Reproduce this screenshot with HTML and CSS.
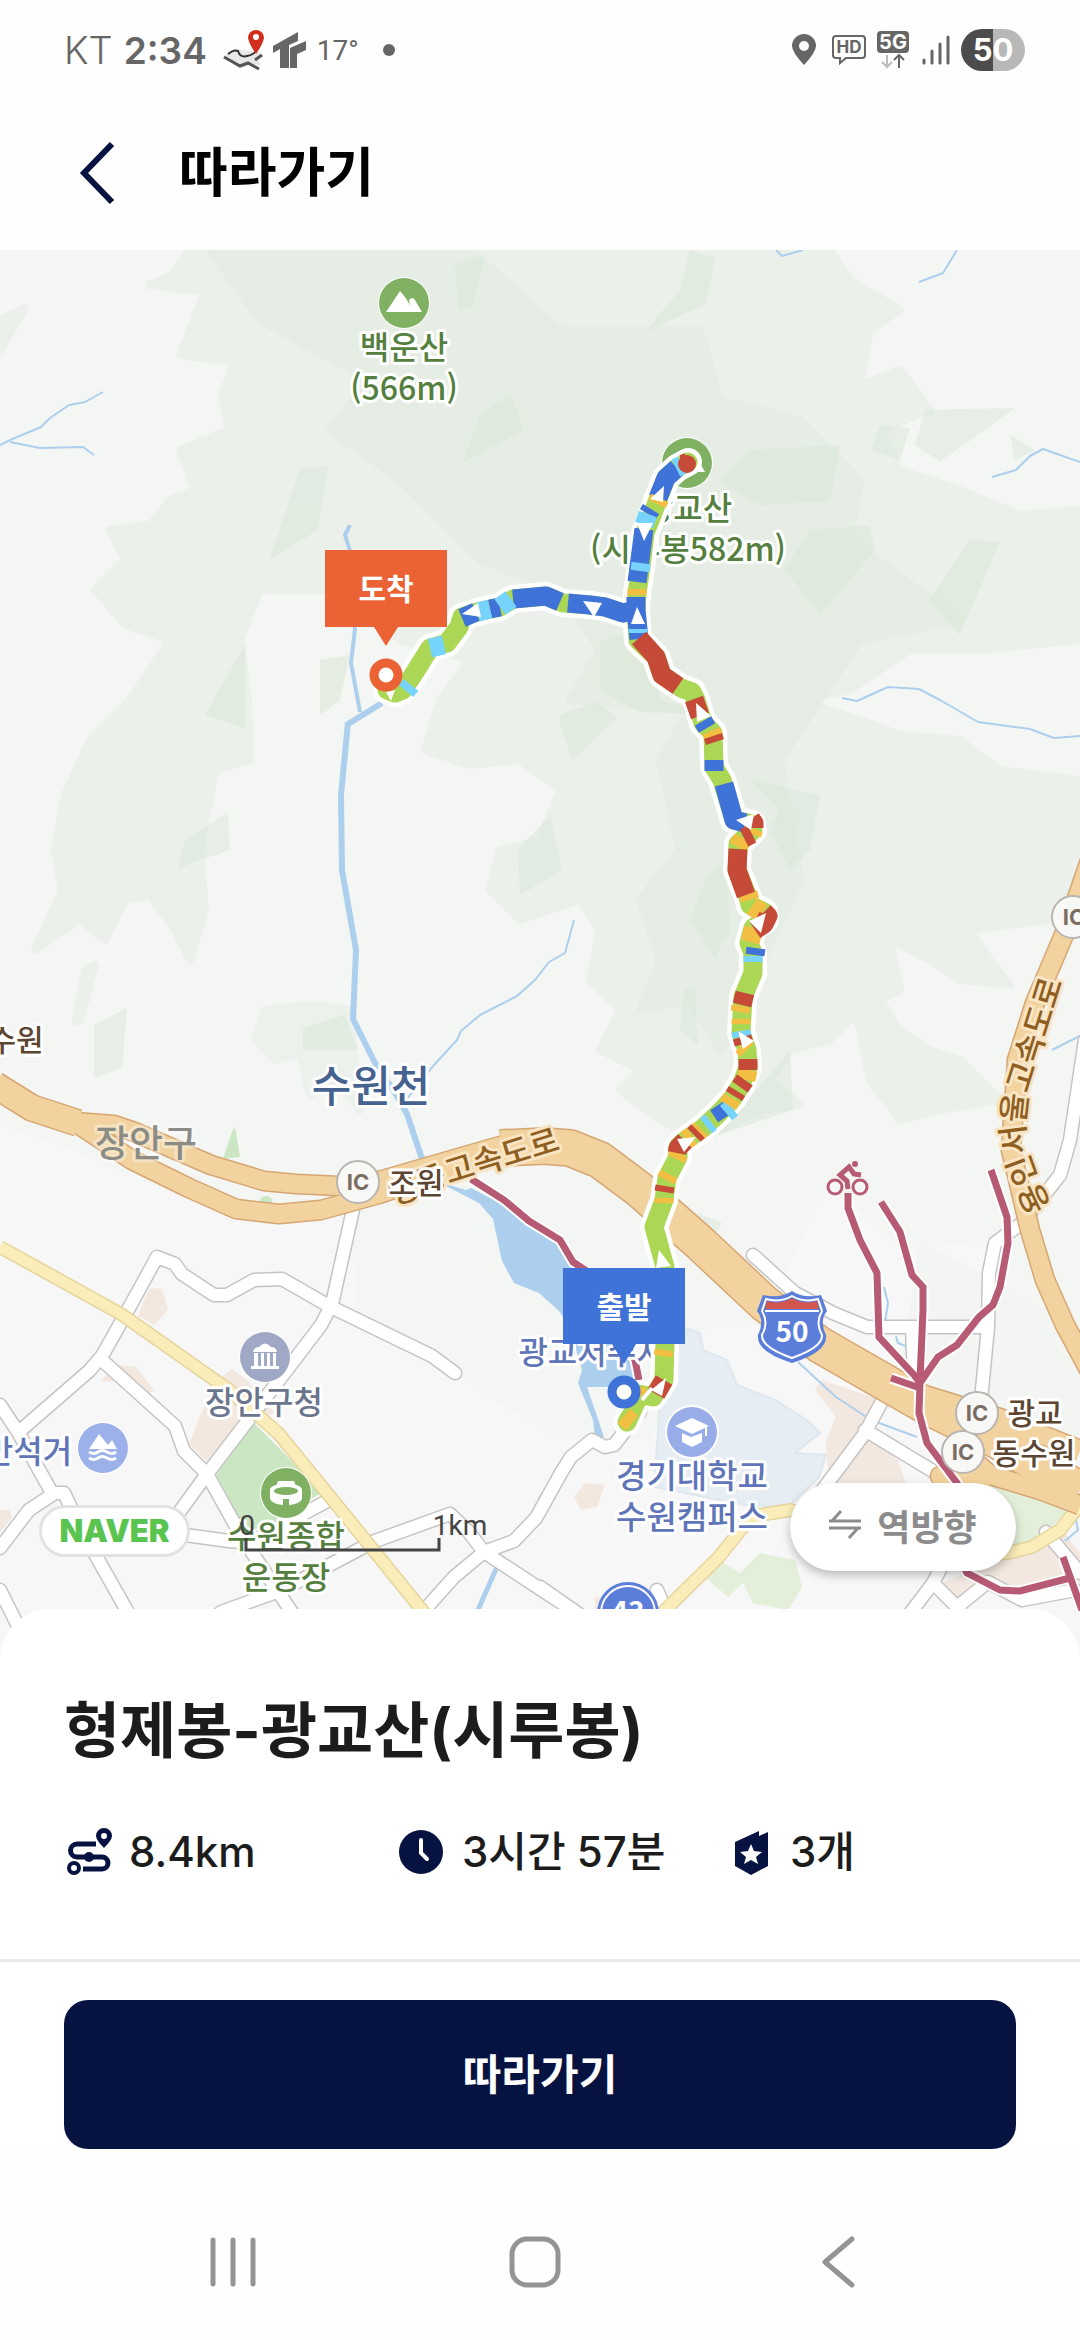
FILE: index.html
```html
<!DOCTYPE html>
<html lang="ko">
<head>
<meta charset="utf-8">
<meta name="viewport" content="width=device-width, initial-scale=1">
<title>따라가기</title>
<link rel="stylesheet" href="styles.css">
</head>
<body>
<div class="app">
  <div class="status">
    <span class="carrier">KT</span>
    <span class="clock">2:34</span>
    <svg class="ic-trail" width="42" height="42" viewBox="0 0 42 42" aria-hidden="true">
      <path d="M2 26 12 20 36 23 40 27 35 30 38 36 27 36 18 39 1 28z" fill="#e8e8e8"/>
      <path d="M1 28 17 37 25 34 36 40M32 31l7-5" fill="none" stroke="#555" stroke-width="3"/>
      <path d="M5 25q6-5 10-3 2 7 9 5 6-1 9-5" fill="none" stroke="#333" stroke-width="2"/>
      <path d="M33 25Q26 15 25 9a8 8 0 0 1 16 0Q40 15 33 25z" fill="#d0301f"/>
      <circle cx="33" cy="8" r="3" fill="#fff"/>
    </svg>
    <svg class="ic-tr" width="34" height="36" viewBox="0 0 34 36" aria-hidden="true">
      <path d="M0 14 25 0v9l-9 4v23H7V17l-7 4zM17 16l16-7v9l-9 4v14h-7z" fill="#666"/>
    </svg>
    <span class="temp">17°</span>
    <span class="dot"></span>
    <span class="spacer"></span>
    <svg class="ic-pin" width="26" height="32" viewBox="0 0 26 32" aria-hidden="true"><path fill-rule="evenodd" d="M13 31Q1 18 1 12a12 12 0 0 1 24 0Q25 18 13 31zM13 7a5 5 0 1 0 0 10 5 5 0 0 0 0-10z" fill="#666"/></svg>
    <svg class="ic-hd" width="36" height="32" viewBox="0 0 36 32" aria-hidden="true"><path d="M5 2h26q3 0 3 3v16q0 3-3 3H15l-6 5v-5H5q-3 0-3-3V5q0-3 3-3z" fill="none" stroke="#666" stroke-width="2"/><text x="18" y="19" class="t-hd">HD</text></svg>
    <svg class="ic-5g" width="32" height="38" viewBox="0 0 32 38" aria-hidden="true"><rect width="32" height="22" rx="4" fill="#666"/><text x="16" y="18" class="t-5g">5G</text><path d="M10 24v12M5 31l5 5 5-5" fill="none" stroke="#bbb" stroke-width="2"/><path d="M22 37V24M17 29l5-5 5 5" fill="none" stroke="#666" stroke-width="2"/></svg>
    <svg class="ic-bars" width="28" height="30" viewBox="0 0 28 30" aria-hidden="true"><path d="M2 25v3M10 16v12M18 9v19M26 2v26" stroke="#666" stroke-width="3" stroke-linecap="round"/></svg>
    <span class="battery">50</span>
  </div>

  <header class="head">
    <button class="back" aria-label="뒤로"><svg width="38" height="64" viewBox="0 0 38 64"><path d="M34 3 6 32 34 61" fill="none" stroke="#061240" stroke-width="6"/></svg></button>
    <h1>따라가기</h1>
  </header>

  <main class="map">
    <svg class="map-art" viewBox="0 250 1080 1413" role="img" aria-label="형제봉-광교산 코스 지도">
      <defs>
        <path id="yd" d="M394 1206 450 1184 598 1138"/>
        <path id="ys" d="M1051 1207Q1027 1160 1025 1135 1024 1105 1032 1080L1068 965"/>
        <path id="yr" d="M0 1247 121 1314 229 1390 279 1434 375 1552 430 1620M655 1620 719 1557 743 1527 760 1515 791 1510 900 1560 1008 1553 1032 1547 1060 1530 1080 1505"/>
        <path id="cy" d="M848 1193V1208L860 1240 877 1273 879 1337 914 1375 920 1383M881 1202 900 1232 912 1275 923 1287V1310L920 1380M991 1170 1007 1217 1008 1243 1000 1287 993 1305 979 1317 957 1345 938 1357 920 1383 919 1413 927 1443 957 1483 950 1540 967 1573 1000 1590 1020 1591 1070 1578M1063 1557 1082 1610M891 1378 920 1388M471 1179 504 1200 529 1221 560 1240 573 1262 585 1270 600 1300 635 1360 639 1380"/>
        <path id="trail" d="M688 462 677 468 666 478 657 502 653 513 645 533 641 567 637 593 636 610 623 613 605 607 590 605 563 603 546 596 513 599 500 607 477 612 462 617 459 627 447 643 430 648 415 672 403 690 395 693 387 690M636 610 638 640 656 657 662 675 681 688 692 692 696 700 703 723 713 733 714 767 722 780 734 820 752 824 753 830 738 844 737 870 748 897 750 905 764 912 765 920 753 928 749 943 753 953 753 973 743 997 741 1033 747 1050 748 1067 742 1083 733 1098 719 1113 703 1128 683 1142 678 1147 678 1157 667 1178 664 1200 654 1227 665 1267 665 1343 664 1380 653 1397 638 1394M637 1400 627 1422"/>
      </defs>
      <rect y="250" width="1080" height="1413" fill="#f4f6f4"/>

      <!-- woodland, light to dark -->
      <g class="wood" fill="#ebf0ea">
        <path d="M190 250 172 275 150 285 205 292 192 325 180 355 235 362 222 395 228 430 180 450 195 490 170 500 150 525 110 530 125 560 95 590 125 625 170 640 150 670 130 700 90 740 65 795 55 850 62 890 35 950 80 920 105 940 125 900 150 895 175 930 190 960 205 910 200 850 215 770 250 760 248 700 240 640 260 590 330 590 400 640 470 660 440 700 425 750 470 765 520 760 560 790 540 840 500 850 490 890 520 920 580 900 600 930 590 980 620 1010 600 1050 640 1070 620 1090 660 1120 700 1140 760 1110 800 1105 770 1080 790 1050 830 1040 860 1010 900 990 890 940 930 960 960 980 1010 985 990 960 970 930 1050 920 1080 930V780L1000 770 960 740 900 735 860 720 800 700 850 690 910 650 980 650 1080 640V510L1020 515 960 490 900 470 880 430 930 410 900 370 860 385 870 330 900 310 850 280 830 250z"/>
        <path d="M265 1010 255 1040 275 1060 300 1052 310 1095 340 1085 360 1110 350 1010 310 1005z" opacity=".8"/>
        <path d="M850 980 880 1000 900 1030 930 1050 960 1060 1000 1100 940 1110 900 1120 870 1080z"/>
        <path d="M85 970 95 965 80 1020 76 1022zM0 320 25 308 0 350z"/>
      </g>
      <g class="wood deep">
        <path d="M210 250 260 320 370 380 330 430 400 480 480 560 560 590 600 650 570 700 690 710 660 760 680 850 640 900 660 960 640 1010 690 1000 720 1050 800 880 780 760 860 640 960 620 850 540 860 480 800 420 720 400 700 330 560 330 470 250z"/>
      </g>
      <g fill="#dbe8d8" opacity=".55">
        <path d="M455 265 485 256 472 308 458 309zM690 250 715 258 706 304 645 332 680 290zM510 393 524 430 463 463 480 415zM300 470 328 465 318 530 270 560zM205 715 245 645 245 728zM320 660 350 655 340 700 320 715z"/>
        <path d="M750 450 840 445 830 500 760 506 720 480zM880 425 910 428 900 460 872 450zM925 410 1015 408 940 462 915 445zM810 530 870 525 875 550 820 615 785 570zM970 540 1000 542 960 635 930 600zM1010 435 1035 450 1015 460z"/>
        <path d="M600 640 640 630 660 700 720 715 640 712 600 690zM560 715 597 702 617 718 572 760 560 725zM725 860 730 930 715 958 690 920 705 880zM750 780 820 795 810 850 790 870 770 830 780 810zM518 850 550 815 562 870 520 895zM185 840 228 812 230 850 178 868zM684 990 695 988 698 1045 680 1030zM94 1025 127 1008 122 1068 94 1078zM303 1028 345 1015 358 1050 303 1050zM718 1135 790 1050 793 1110zM695 1212 722 1223 716 1234z"/>
      </g>

      <!-- built-up ground -->
      <path d="M0 1125 60 1145 200 1205 280 1225 350 1215 370 1260 380 1330 430 1360 500 1400 560 1440 650 1440 700 1330 760 1325 830 1180 900 1250 990 1240 1000 1320 1080 1450V1663H0z" fill="#f7f7f7"/>
      <path d="M350 1215 450 1190 560 1320 575 1400 555 1430 500 1405 440 1350 360 1330z" fill="#f3f6f3"/>
      <path d="M920 1240 1080 1330 1080 1450 900 1380z" fill="#f2f5f2"/>
      <path d="M685 1328 700 1333 703 1350 727 1360 737 1385 775 1400 807 1420 820 1433 795 1453 826 1455 819 1477 788 1507 745 1505 654 1487 660 1403z" fill="#e6edf3" stroke="#dfe7ef" stroke-width="2"/>
      <g fill="#f2e8df">
        <path d="M198 1421 214 1383 232 1369 246 1379 275 1413 250 1425 207 1461 189 1444zM146 1295 151 1288 162 1289 168 1310 154 1325 138 1316zM100 1381 118 1365 136 1367 154 1390 146 1396 128 1382zM0 1510 10 1510 12 1518 0 1532z"/>
        <path d="M822 1380 881 1400 870 1433 829 1490 826 1440 836 1417 815 1390zM867 1437 898 1460 908 1490 830 1490zM585 1483 605 1485 597 1507 581 1510 574 1497zM943 1583 1015 1550 1063 1530 1080 1553V1590L988 1587 950 1605zM595 1597h15v13h-15z"/>
      </g>
      <g fill="#cbe6c3"><path d="M254 1423 282 1451 321 1493 264 1527 246 1531 216 1474zM223 1159 232 1132 235 1127 240 1157z"/><ellipse cx="266" cy="1201" rx="6" ry="5"/></g>
      <path d="M705 1577 722 1562 740 1573 760 1553 795 1560 802 1587 788 1610 753 1603 743 1583 728 1597zM950 1480 1022 1484 1070 1510 1029 1547 1000 1550z" fill="#e3efd9"/>

      <!-- water -->
      <path d="M421 1156 446 1184 466 1190 471 1188 500 1203 560 1240 600 1300 633 1360 640 1387 587 1387 595 1410 604 1437 595 1438 593 1420 578 1383 582 1370 570 1330 560 1312 539 1293 514 1283 502 1261 493 1219 479 1203 446 1186z" fill="#accfed"/>
      <g fill="none" stroke="#accfed" stroke-linejoin="round">
        <path d="M382 703 348 724M348 722 341 795 342 870 356 950 353 1019 379 1071 393 1089 407 1114 421 1156 427 1165" stroke-width="6"/>
        <path d="M350 525 345 535 351 554 355 629 351 663 360 712" stroke-width="4"/>
        <path d="M574 920 565 953 549 962 535 980 517 996 480 1015 461 1031 457 1040 434 1065 406 1100M0 445 10 440 41 427 50 418 69 405 85 402 103 392M10 442 40 448 83 447 94 455M919 282 943 273 957 250M776 250 782 256 803 250M992 477 1016 470 1030 456 1043 449 1080 462M842 698 857 701 888 687 919 689 940 700 978 722 1030 729 1054 738 1080 736M798 1362 836 1397 871 1420 917 1437M884 1287 888 1303 885 1322M1052 1050 1080 1036M1075 1515 1078 1530 1065 1541M896 1336 898 1343 908 1347" stroke-width="2"/>
        <path d="M500 1560 478 1610M555 1478 540 1500" stroke-width="5"/>
      </g>

      <!-- local roads: outline, then fill -->
      <g class="road-edge">
        <path id="r1" d="M21 1430 89 1371 102 1356 129 1308 157 1257 175 1264 182 1274 214 1295 227 1295 254 1280 282 1279 329 1306 432 1356 455 1373"/>
        <path id="r2" d="M354 1205 332 1304 321 1325 286 1371 207 1474 175 1518"/>
        <path id="r3" d="M104 1362 175 1426 184 1451 207 1474 243 1539 297 1620M0 1405 18 1432 52 1493 64 1493 82 1531 135 1625M0 1548 29 1510 52 1495M185 1535 229 1541 275 1545 M0 1590 25 1640"/>
        <path id="r4" d="M257 1539 329 1500M221 1612 282 1590 375 1541 450 1514 468 1531 484 1552 580 1615M420 1615 454 1577 484 1552 514 1541 536 1518 561 1473 571 1457 592 1440 605 1447 614 1445 640 1412"/>
        <path id="r5" d="M753 1255 795 1293 833 1313 867 1327 988 1327M1085 1040 1070 1140 1060 1175 1022 1223 995 1243 989 1273 988 1327 981 1400M912 1327 914 1378M881 1403 865 1433 800 1520M865 1430 936 1473 965 1490M905 1620 933 1583 960 1610M957 1607 988 1582 1022 1600 1075 1590M933 1583 945 1560M1046 1532 1080 1573M657 1590 670 1620M540 1587 580 1615"/>
      </g>
      <g class="road"><use href="#r1"/><use href="#r2"/><use href="#r3"/><use href="#r4"/><use href="#r5"/></g>
      <use href="#yr" class="yellow-edge"/>
      <use href="#yr" class="yellow"/>

      <!-- motorways -->
      <g class="mway-edge">
        <g stroke-width="21"><path d="M75 1122 114 1125 132 1131 211 1165 264 1181 296 1184 339 1186 379 1181 500 1146 560 1150M75 1122 132 1160 189 1188 236 1209 279 1214 321 1210 379 1194 500 1153"/>
        <path d="M1092 855 1066 930 1035 1003 1017 1060 1011 1150 1030 1230 1045 1280 1065 1325 1092 1375M915 1392 1000 1418 1080 1450M950 1440 990 1475 1040 1490 1080 1505M955 1493 940 1476 990 1478"/></g>
        <path d="M-5 1085 32 1108 78 1123" stroke-width="28"/>
        <path d="M500 1148 545 1146 570 1148 600 1160 640 1190 700 1243 765 1304 820 1345 895 1388 930 1408 1000 1442 1080 1490" stroke-width="38"/>
      </g>
      <g class="mway">
        <g stroke-width="18"><path d="M75 1122 114 1125 132 1131 211 1165 264 1181 296 1184 339 1186 379 1181 500 1146 560 1150M75 1122 132 1160 189 1188 236 1209 279 1214 321 1210 379 1194 500 1153"/>
        <path d="M1092 855 1066 930 1035 1003 1017 1060 1011 1150 1030 1230 1045 1280 1065 1325 1092 1375M915 1392 1000 1418 1080 1450M950 1440 990 1475 1040 1490 1080 1505M955 1493 940 1476 990 1478"/></g>
        <path d="M-5 1085 32 1108 78 1123" stroke-width="25"/>
        <path d="M500 1148 545 1146 570 1148 600 1160 640 1190 700 1243 765 1304 820 1345 895 1388 930 1408 1000 1442 1080 1490" stroke-width="35"/>
      </g>

      <!-- cycle ways -->
      <use href="#cy" class="cycle-edge"/>
      <use href="#cy" class="cycle"/>
      <g fill="none" stroke="#b75a74" stroke-width="3"><circle cx="835" cy="1187" r="7"/><circle cx="860" cy="1187" r="7"/><path d="M848 1189 847 1181 840 1175 849 1167 854 1174 861 1175" stroke-width="5"/></g><circle cx="855" cy="1164" r="3" fill="#b75a74"/>

      <!-- place symbols -->
      <g id="peak1" transform="translate(404 303)"><circle r="26" fill="#fff"/><circle r="25" fill="#80b163"/><path d="M-18 9-4-12Q4-3 6 3L5-3Q8-7 11-3L18 9z" fill="#fff"/></g>
      <use href="#peak1" x="283" y="160"/>
      <g transform="translate(265 1357)"><circle r="26" fill="#fff"/><circle r="25" fill="#9fa9c5"/><path d="M-12-5Q-11-10-6-10 0-17 6-10 11-10 12-5zM-11-4h4V9h-4zM-4-4h3V9h-3zM2-4h3V9H2zM8-4h3V9H8zM-14 9h28v3h-28z" fill="#fff"/></g>
      <g transform="translate(103 1448)"><circle r="26" fill="#fff"/><circle r="25" fill="#9cb1e9"/><path d="M-14 1-4-14 5-3 9-8 14 1z" fill="#fff"/><path d="M-14 4q5 3 9 0t9 0 9 0M-14 10q5 3 9 0t9 0 9 0" fill="none" stroke="#fff" stroke-width="3"/></g>
      <g transform="translate(286 1493)"><circle r="26" fill="#fff"/><circle r="25" fill="#80b163"/><path d="M-8-12H8L10-7H-10zM-16-4Q-14-9 0-9T16-4V6Q14 11 3 12V6H-3V12Q-14 11-16 6z" fill="#fff"/><ellipse cy="-2" rx="12" ry="4" fill="#80b163"/></g>
      <g transform="translate(692 1432)"><circle r="27" fill="#fff"/><circle r="25" fill="#98ade8"/><path d="M0-14 17-6 0 2-17-6zM-10 1-1 5 10 1V10L0 15-10 10zM13-5h2V4h-2z" fill="#fff"/></g>
      <g transform="translate(792 1327)"><path d="M0-36Q12-28 29-32L35-16Q27-6 34 8 36 25 0 36-36 25-34 8-27-6-35-16L-29-32Q-12-28 0-36z" fill="#5c7edb"/><path d="M0-31Q12-24 26-28L30-16Q23-4 30 8 31 20 0 31-31 20-30 8-23-4-30-16L-26-28Q-12-24 0-31z" fill="#5c7edb" stroke="#fff" stroke-width="2"/><path d="M-25-26Q-12-22 0-29 12-22 25-26L27-18H-27z" fill="#d15650"/><path d="M-27-16H27" stroke="#fff" stroke-width="2"/><text class="shield" y="15">50</text></g>
      <g transform="translate(628 1613)"><circle r="31" fill="#5c7edb"/><circle r="27" fill="#5c7edb" stroke="#fff" stroke-width="2"/><text class="shield" y="9">43</text></g>

      <!-- place names -->
      <g class="label green"><text x="404" y="359">백운산</text><text x="404" y="400">(566m)</text><text x="688" y="520">광교산</text><text x="688" y="561">(시루봉582m)</text><text x="286" y="1548">수원종합</text><text x="286" y="1589">운동장</text></g>
      <g class="label motor"><text><textPath href="#yd">영동고속도로</textPath></text><text><textPath href="#ys">용인서울고속도로</textPath></text></g>
      <text class="label river" x="371" y="1102">수원천</text>
      <text class="label district" x="146" y="1157">장안구</text>
      <text class="label office" x="264" y="1414">장안구청</text>
      <g class="label blue"><text x="28" y="1463">만석거</text><text x="592" y="1364">광교저수지</text></g>
      <g class="label blue campus"><text x="692" y="1488">경기대학교</text><text x="692" y="1529">수원캠퍼스</text></g>
      <g class="ic-mark">
        <circle cx="1073" cy="917" r="21"/><circle cx="358" cy="1182" r="21"/><circle cx="963" cy="1452" r="21"/><circle cx="977" cy="1413" r="21"/>
        <text x="1074" y="925">IC</text><text x="358" y="1190">IC</text><text x="963" y="1460">IC</text><text x="977" y="1421">IC</text>
      </g>
      <g class="label brown"><text x="16" y="1051">수원</text><text x="416" y="1194">조원</text><text x="1035" y="1424">광교</text><text x="1034" y="1464">동수원</text></g>

      <!-- trail: white casing, base, then gradient bands -->
      <use href="#trail" class="trail-case"/>
      <use href="#trail" class="trail-base"/>
      <g class="trail b">
        <path d="M677 468 666 478 658 498M651 509 648 514M644 529 637 582M636 597V610L623 613 605 607 590 605 568 603M560 602 546 596 513 599M500 607 490 609M476 612 462 618M636 610 639 639M703 721 707 728M714 760V771M724 784 734 820 745 823M756 948 755 955M718 1105 726 1117"/>
      </g>
      <g class="trail c">
        <path d="M682 465 676 468M648 514 644 525M641 563 640 571M511 599 500 607M490 609 478 612M444 645 430 648M411 685 406 691M638 629V633M753 956V962M741 1031 742 1037M732 1108 726 1113M711 1122 706 1126"/>
      </g>
      <g class="trail y">
        <path d="M660 498 657 504M637 589 637 595M711 731 714 738M754 829 752 834M743 838 738 847M748 893 750 900M752 906 762 913M754 928 750 942M741 1006 740 1012M741 1019V1024M742 1045 747 1050M748 1070 746 1080M732 1098 728 1105M701 1129 697 1133M692 1136 686 1140M679 1153 676 1159M669 1174 666 1180M664 1198V1203M664 1350 663 1356M636 1392 640 1397M624 1416 632 1423"/>
      </g>
      <g class="trail r">
        <path d="M688 462 683 464M639 638 656 657 662 675 678 686M694 699 700 716M713 736 715 742M751 819 754 823 754 828M752 834 744 838M738 849 737 870 746 895M764 912 768 916 764 924 755 930M745 993 742 1005M742 1037 744 1044M748 1059V1070M745 1080 740 1087M737 1091 734 1096M698 1131 694 1135M685 1141 678 1148 677 1153M665 1186 664 1192M664 1380 656 1394"/>
      </g>
      <path d="M652 1388 642 1400M625 1404 617 1416" stroke="#fff" stroke-width="4"/>
      <circle cx="687" cy="464" r="9" fill="#c64a38"/>
      <path fill="#fff" d="M664 486 650 499 663 502zM637 523H653L644 541zM583 601 602 603 594 617zM462 614 478 603 481 617zM386 692 395 690 391 701zM637 607 631 624 645 624zM696 703 697 722 711 716zM736 820 754 814 751 830zM749 921 766 913 761 933zM738 1031 754 1041 743 1049zM677 1139 696 1137 684 1152zM659 1250 671 1266 656 1268zM651 1390 666 1378 662 1396z"/>

      <!-- start and finish flags -->
      <g class="flag finish"><path d="M325 550H447V627H398L386 646 374 627H325z"/><circle cx="386" cy="675" r="12"/><text x="386" y="600">도착</text></g>
      <g class="flag start"><path d="M563 1268H685V1344H636L624 1364 612 1344H563z"/><circle cx="624" cy="1392" r="12"/><text x="624" y="1318">출발</text></g>

      <g class="scale"><path d="M246 1538V1550H439V1538"/><text x="247" y="1535">0</text><text x="460" y="1535">1km</text></g>
    </svg>
    <a class="naver" href="#">NAVER</a>
    <button class="reverse"><svg width="32" height="32" viewBox="0 0 32 32"><path d="M0 12H32M3 12 12 2M0 19H32M29 19 20 29" fill="none" stroke="#8c8c8c" stroke-width="3"/></svg>역방향</button>
  </main>

  <section class="sheet">
    <h2>형제봉-광교산(시루봉)</h2>
    <ul class="stats">
      <li><svg width="48" height="48" viewBox="0 0 48 48" aria-hidden="true"><g fill="none" stroke="#061240" stroke-width="5"><path d="M32 16H13a6 6 0 0 0 0 13H38a6 6 0 0 1 0 12H19"/></g><path fill-rule="evenodd" d="M40 20Q32 12 32 8a8 8 0 0 1 16 0Q48 12 40 20zM40 5a3 3 0 1 0 0 6 3 3 0 0 0 0-6z" fill="#061240"/><circle cx="10" cy="40" r="5" fill="#fff" stroke="#061240" stroke-width="4"/><circle cx="25" cy="29" r="5" fill="#061240"/></svg>8.4km</li>
      <li><svg width="48" height="48" viewBox="0 0 48 48" aria-hidden="true"><circle cx="24" cy="24" r="22" fill="#061240"/><path d="M24 12V25L30 31" fill="none" stroke="#fff" stroke-width="4" stroke-linecap="round"/></svg>3시간 57분</li>
      <li><svg width="42" height="48" viewBox="0 0 42 48" aria-hidden="true"><path d="M4 14 28 3V8L37 4V38L20 47 4 38z" fill="#061240"/><path d="M20 16 23 23 31 24 25 29 27 36 20 32 13 36 15 29 9 24 17 23z" fill="#fff"/></svg>3개</li>
    </ul>
  </section>
  <div class="action"><button class="follow">따라가기</button></div>

  <nav class="sysnav">
    <button aria-label="최근 앱"><svg width="48" height="52" viewBox="0 0 48 52"><path d="M4 4V48M24 4V48M44 4V48"/></svg></button>
    <button aria-label="홈"><svg width="52" height="52" viewBox="0 0 52 52"><rect x="3" y="3" width="46" height="46" rx="15"/></svg></button>
    <button aria-label="뒤로 가기"><svg width="34" height="52" viewBox="0 0 34 52"><path d="M31 3 4 26 31 49"/></svg></button>
  </nav>
</div>
</body>
</html>
```
FILE: styles.css
```css
* { box-sizing: border-box; margin: 0; padding: 0; }
body { background: #fefefe; font-family: Inter, "Noto Sans CJK KR", sans-serif; color: #1c1c1c; }
button { border: 0; background: none; font: inherit; cursor: pointer; }
svg { display: block; }
.app { min-height: 100vh; display: flex; flex-direction: column; background: #fefefe; }

.status { display: flex; align-items: center; height: 100px; padding: 0 55px 0 64px; color: #666; }
.status svg { flex: none; }
.carrier { font-size: 38px; font-weight: 300; }
.clock { font-size: 37px; font-weight: 600; margin-left: 11px; }
.ic-trail { margin-left: 16px; }
.ic-tr { margin-left: 8px; }
.temp { font-family: Roboto, sans-serif; font-size: 28px; font-weight: 400; margin-left: 10px; }
.dot { width: 12px; height: 12px; border-radius: 50%; background: #666; margin-left: 24px; }
.spacer { flex: 1; }
.ic-hd { margin-left: 14px; }
.ic-5g { margin-left: 10px; }
.ic-bars { margin-left: 13px; }
.t-hd, .t-5g { font-family: Inter, sans-serif; font-size: 17px; font-weight: 700; text-anchor: middle; fill: #666; }
.t-5g { font-size: 20px; fill: #fff; }
.battery { width: 64px; height: 42px; margin-left: 11px; border-radius: 21px; background: linear-gradient(90deg, #4c4c4c 50%, #b8b8b8 50%); color: #fff; font-size: 31px; font-weight: 700; line-height: 42px; text-align: center; }

.head { display: flex; align-items: center; height: 150px; padding: 0 64px 4px 78px; gap: 63px; }
.head h1 { font-size: 53px; font-weight: 700; color: #000; line-height: 60px; }

.map { position: relative; }
.map-art { width: 100%; height: auto; }
.map-art text { font-family: "Noto Sans CJK KR", sans-serif; }
.wood { stroke: #ebf0ea; stroke-width: 8px; stroke-linejoin: round; }
.deep { fill: #e4ede2; stroke: #e4ede2; opacity: .75; }
.road-edge, .road { fill: none; stroke-linejoin: round; stroke-linecap: round; }
.road-edge { stroke: #c4c4c4; stroke-width: 15px; }
.road { stroke: #fff; stroke-width: 12px; }
.yellow-edge, .yellow { fill: none; stroke-linejoin: round; }
.yellow-edge { stroke: #e5d49c; stroke-width: 14px; }
.yellow { stroke: #faedb9; stroke-width: 11px; }
.mway-edge, .mway { fill: none; stroke-linejoin: round; }
.mway-edge { stroke: #d6a673; }
.mway { stroke: #f2d39f; }
.cycle-edge, .cycle { fill: none; }
.cycle-edge { stroke: #fff; stroke-width: 11px; }
.cycle { stroke: #b75a74; stroke-width: 7px; }
.shield { font-size: 28px; font-weight: 700; fill: #fff; text-anchor: middle; }
.ic-mark circle { fill: #f8f8f7; stroke: #b9b5b1; stroke-width: 2px; }
.map-art .ic-mark text { font-family: Inter, sans-serif; font-size: 22px; font-weight: 700; fill: #7a6e62; text-anchor: middle; }
.label { font-size: 32px; font-weight: 500; text-anchor: middle; paint-order: stroke; stroke: #fff; stroke-width: 6px; stroke-linejoin: round; }
.green { fill: #547f3e; }
.motor { fill: #8f5f22; stroke: #f9e5c4; text-anchor: start; }
.river { font-size: 43px; fill: #46628f; }
.district { font-size: 37px; fill: #8c8c86; stroke: #fff; stroke-opacity: .4; }
.office { fill: #6b758d; }
.blue { fill: #6075b7; }
.campus { font-size: 33px; }
.brown { font-size: 30px; fill: #5c4632; }
.trail { fill: none; stroke-width: 19px; stroke-linejoin: round; }
.trail-case, .trail-base { fill: none; stroke-linejoin: round; stroke-linecap: round; }
.trail-case { stroke: #fff; stroke-width: 28px; }
.trail-base { stroke: #abd755; stroke-width: 19px; }
.b { stroke: #3f73d8; }
.c { stroke: #76d3fc; }
.y { stroke: #f3bf42; }
.r { stroke: #c64a38; }
.flag text { font-size: 30px; font-weight: 700; fill: #fff; stroke: none; text-anchor: middle; }
.flag circle { fill: #fff; stroke-width: 9px; }
.finish { fill: #eb6334; }
.finish circle { stroke: #eb6334; }
.start { fill: #3f73d8; }
.start circle { stroke: #3f73d8; }
.scale path { fill: none; stroke: #444; stroke-width: 3px; }
.map-art .scale text { font-family: Roboto, sans-serif; font-size: 28px; fill: #444; text-anchor: middle; }

.naver { position: absolute; left: 39px; bottom: 106px; width: 151px; height: 52px; border: 3px solid #e2e2e2; border-radius: 26px; background: #fff; color: #5ac451; font-family: Inter, sans-serif; font-size: 31px; font-weight: 900; line-height: 46px; text-align: center; text-decoration: none; }
.reverse { position: absolute; right: 64px; bottom: 92px; display: flex; align-items: center; justify-content: center; gap: 16px; width: 226px; height: 88px; padding-bottom: 4px; border-radius: 44px; background: #fff; box-shadow: 0 4px 10px rgba(0, 0, 0, .25); color: #8c8c8c; font-size: 36px; font-weight: 700; }

.sheet { position: relative; margin-top: -54px; padding: 78px 64px 0; height: 350px; border-radius: 50px 50px 0 0; background: #fff; }
.sheet h2 { font-size: 61px; font-weight: 700; line-height: 88px; white-space: nowrap; }
.stats { display: grid; grid-template-columns: 333fr 334fr 285fr; list-style: none; margin-top: 46px; }
.stats li { display: flex; align-items: center; gap: 17px; font-size: 42px; font-weight: 500; line-height: 62px; white-space: nowrap; }
.action { border-top: 3px solid #e9e9e9; padding: 38px 64px 0; background: #fff; }
.follow { display: block; width: 100%; height: 149px; padding-bottom: 6px; border-radius: 24px; background: #061240; color: #fff; font-size: 42px; font-weight: 700; }

.sysnav { flex: 1; display: grid; grid-template-columns: repeat(3, 1fr); align-items: center; min-height: 180px; padding: 34px 91px 0 82px; }
.sysnav button { display: flex; justify-content: center; }
.sysnav svg { fill: none; stroke: #949494; stroke-width: 5px; stroke-linecap: round; stroke-linejoin: round; }
```
